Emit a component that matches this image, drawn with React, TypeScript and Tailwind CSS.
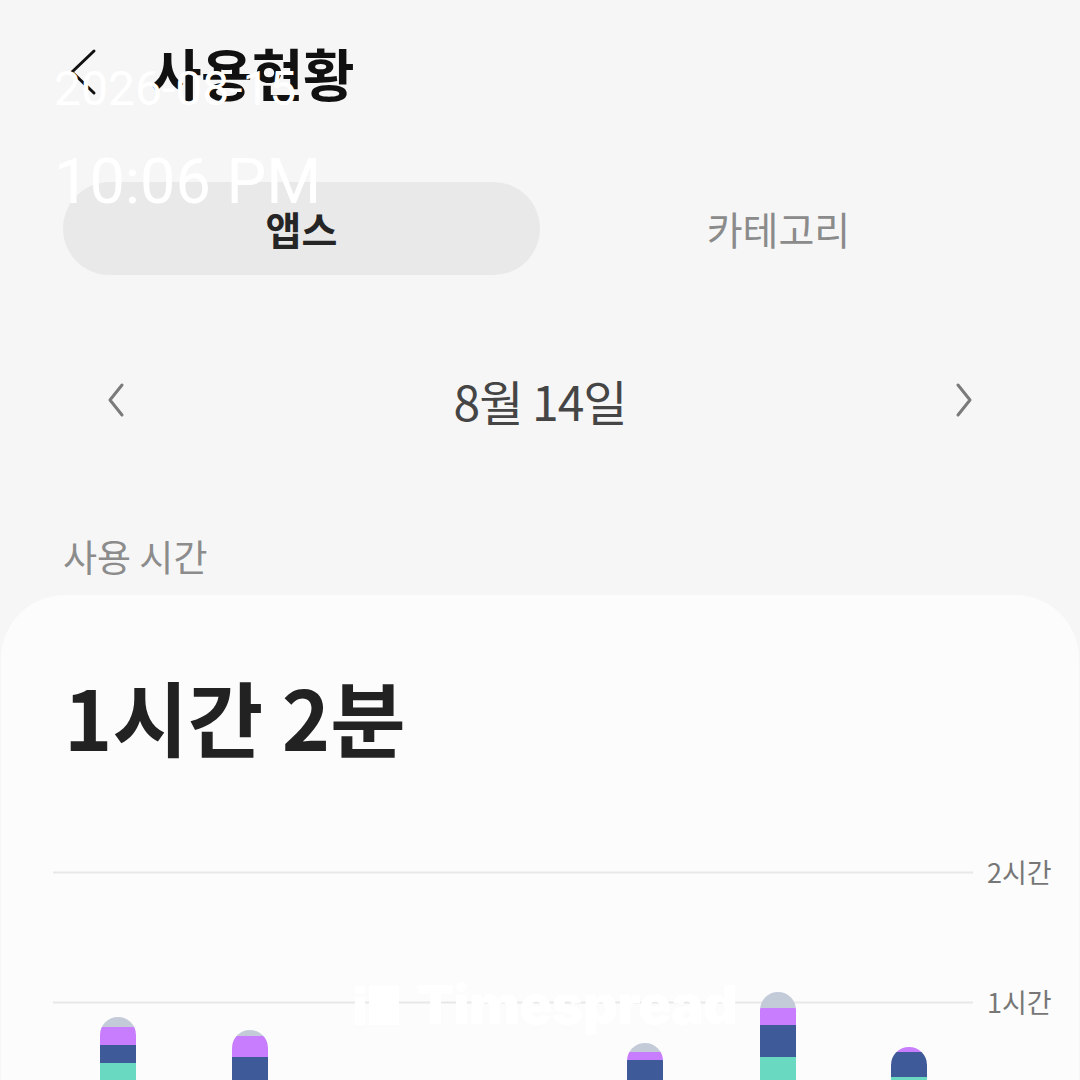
import React from "react";

const KR = { fontFamily: '"Noto Sans CJK KR", "Noto Sans", sans-serif' };

type Seg = { c: string; from: number; to: number };
type Bar = { x: number; top: number; segs: Seg[] };

const G = "#c3cbd9";
const P = "#c77dfd";
const N = "#3f5a98";
const T = "#69d9c1";

const bars: Bar[] = [
  { x: 47, top: 177, segs: [{ c: G, from: 177, to: 187 }, { c: P, from: 187, to: 205 }, { c: N, from: 205, to: 223 }, { c: T, from: 223, to: 260 }] },
  { x: 179, top: 190, segs: [{ c: G, from: 190, to: 196 }, { c: P, from: 196, to: 217 }, { c: N, from: 217, to: 260 }] },
  { x: 574, top: 203, segs: [{ c: G, from: 203, to: 212 }, { c: P, from: 212, to: 220 }, { c: N, from: 220, to: 260 }] },
  { x: 707, top: 152, segs: [{ c: G, from: 152, to: 168 }, { c: P, from: 168, to: 185 }, { c: N, from: 185, to: 217 }, { c: T, from: 217, to: 260 }] },
  { x: 838, top: 207, segs: [{ c: P, from: 207, to: 212 }, { c: N, from: 212, to: 237 }, { c: T, from: 237, to: 260 }] },
];

function Chart() {
  return (
    <svg width="920" height="240" viewBox="0 0 920 240" className="block">
      <defs>
        {bars.map((b, i) => (
          <clipPath id={`bc${i}`} key={i}>
            <rect x={b.x} y={b.top} width="36" height="200" rx="18" ry="18" />
          </clipPath>
        ))}
      </defs>
      <line x1="0" y1="32.5" x2="920" y2="32.5" stroke="#e8e8e8" strokeWidth="2" />
      <line x1="0" y1="162.5" x2="920" y2="162.5" stroke="#e8e8e8" strokeWidth="2" />
      {bars.map((b, i) => (
        <g clipPath={`url(#bc${i})`} key={i}>
          {b.segs.map((s, j) => (
            <rect key={j} x={b.x} y={s.from} width="36" height={s.to - s.from} fill={s.c} />
          ))}
        </g>
      ))}
    </svg>
  );
}

export default function App() {
  return (
    <div className="relative w-[1080px] h-[1080px] overflow-hidden bg-[#f6f6f6]" style={KR}>
      {/* Header */}
      <div className="h-[144px] flex items-center pl-[66px]">
        <svg width="34" height="50" viewBox="0 0 34 50" className="mr-[50px]">
          <path d="M28 4 L6 25 L28 46" fill="none" stroke="#111" strokeWidth="3" strokeLinecap="round" strokeLinejoin="round" />
        </svg>
        <span className="text-[56px] font-bold text-[#111] leading-none tracking-[-0.5px]">사용현황</span>
      </div>

      {/* Tabs */}
      <div className="mt-[38px] px-[63px] flex h-[93px]">
        <div className="flex-1 rounded-full bg-[#e9e9e9] flex items-center justify-center">
          <span className="text-[39px] font-bold text-[#252525]">앱스</span>
        </div>
        <div className="flex-1 flex items-center justify-center">
          <span className="text-[39px] text-[#8b8b8b]">카테고리</span>
        </div>
      </div>

      {/* Date nav */}
      <div className="mt-[75px] h-[100px] flex items-center justify-between px-[104px]">
        <svg width="26" height="36" viewBox="0 0 26 36">
          <path d="M18 3 L6 18 L18 33" fill="none" stroke="#7a7a7a" strokeWidth="3" strokeLinecap="round" strokeLinejoin="round" />
        </svg>
        <span className="text-[48px] text-[#454545] tracking-[-1px]">8월 14일</span>
        <svg width="26" height="36" viewBox="0 0 26 36">
          <path d="M8 3 L20 18 L8 33" fill="none" stroke="#7a7a7a" strokeWidth="3" strokeLinecap="round" strokeLinejoin="round" />
        </svg>
      </div>

      {/* Section label */}
      <div className="mt-[85px] pl-[63px] h-[44px] flex items-center">
        <span className="text-[37px] text-[#8c8c8c]">사용 시간</span>
      </div>

      {/* Card */}
      <div className="mt-[16px] mx-[1px] rounded-t-[64px] bg-[#fcfcfc] h-[600px]">
        <div className="pt-[80px] pl-[63px] h-[245px]">
          <span className="text-[82px] font-bold text-[#222] leading-none">1시간 2분</span>
        </div>
        <div className="flex pl-[52px]">
          <Chart />
          <div className="flex flex-col pl-[14px] pt-[16px]">
            <span className="text-[27px] leading-[32px] text-[#777]">2시간</span>
            <span className="text-[27px] leading-[32px] text-[#777] mt-[98px]">1시간</span>
          </div>
        </div>
      </div>

      {/* Watermark */}
      <div className="absolute left-[355px] top-[978px] flex items-center gap-[18px]">
        <div className="flex gap-[4px]">
          <div className="flex flex-col gap-[3px]">
            <div className="w-[10px] h-[8px] bg-white" />
            <div className="w-[10px] h-[28px] bg-white" />
          </div>
          <div className="w-[30px] h-[39px] bg-white" />
        </div>
        <span className="text-[54px] font-black text-white leading-none tracking-[-0.5px]" style={{ fontFamily: 'Inter, "Liberation Sans", sans-serif' }}>
          Timespread
        </span>
      </div>

      {/* Timestamp overlay */}
      <div className="absolute left-[54px] top-[62px] text-white font-normal" style={{ fontFamily: 'Roboto, "Liberation Sans", sans-serif' }}>
        <div className="text-[48px] leading-[54px]">2026-08-15</div>
        <div className="text-[63px] leading-[72px] mt-[30px]">10:06 PM</div>
      </div>
    </div>
  );
}
